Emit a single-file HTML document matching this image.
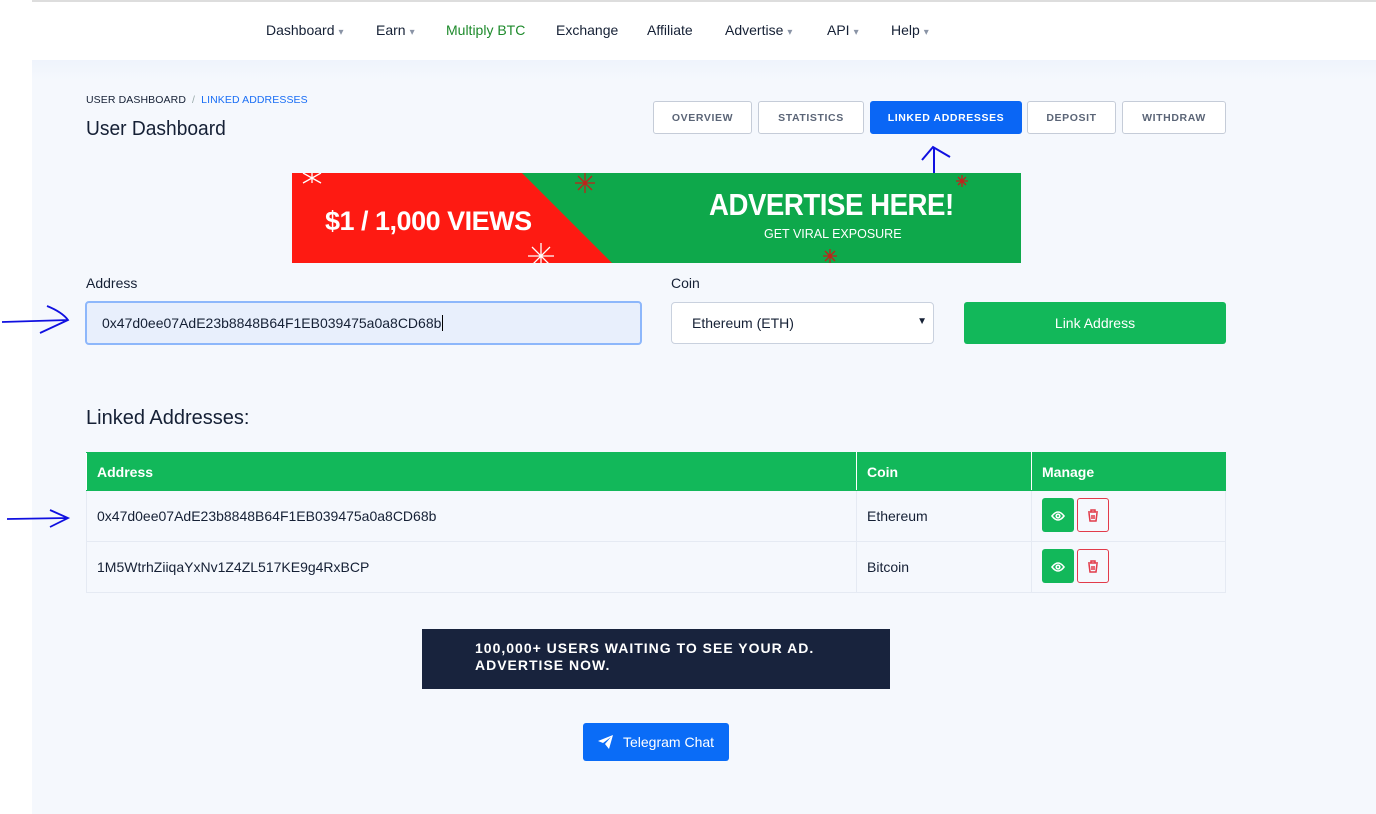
<!DOCTYPE html>
<html><head><meta charset="utf-8"><style>
*{box-sizing:border-box;margin:0;padding:0}
body{width:1376px;height:814px;overflow:hidden;background:#fff;font-family:"Liberation Sans",sans-serif;color:#152035;position:relative}
.a{position:absolute}
.nav{font-size:14px;top:22px;color:#152035;white-space:nowrap}
.nav .c{color:#8a94a6;font-size:10px;margin-left:4px}
.tab{position:absolute;top:101px;height:33px;border:1px solid #c5ccd8;border-radius:3px;background:#fff;font-size:10.5px;font-weight:bold;color:#5b6577;letter-spacing:.6px;display:flex;align-items:center;justify-content:center}
td,th{border:1px solid #e5eaf3;font-size:14px;text-align:left;padding:0 10px}
</style></head><body>
<div class="a" style="left:32px;top:0;width:1344px;height:2px;background:#ddd"></div>
<div class="a" style="left:32px;top:60px;width:1344px;height:754px;background:linear-gradient(#eff4fc,#f5f8fd 20px)"></div>

<div class="a nav" style="left:266px">Dashboard<span class="c">▾</span></div>
<div class="a nav" style="left:376px">Earn<span class="c">▾</span></div>
<div class="a nav" style="left:446px;color:#1d8a2b">Multiply BTC</div>
<div class="a nav" style="left:556px">Exchange</div>
<div class="a nav" style="left:647px">Affiliate</div>
<div class="a nav" style="left:725px">Advertise<span class="c">▾</span></div>
<div class="a nav" style="left:827px">API<span class="c">▾</span></div>
<div class="a nav" style="left:891px">Help<span class="c">▾</span></div>

<div class="a" style="left:86px;top:94px;font-size:10.5px;letter-spacing:.1px">USER DASHBOARD &nbsp;<span style="color:#9aa">/</span>&nbsp; <span style="color:#1a6ef5">LINKED ADDRESSES</span></div>
<div class="a" style="left:86px;top:118px;font-size:20px;transform:scaleX(.96);transform-origin:left">User Dashboard</div>

<div class="tab" style="left:653px;width:99px">OVERVIEW</div>
<div class="tab" style="left:758px;width:106px">STATISTICS</div>
<div class="tab" style="left:870px;width:152px;background:#0a66f5;border-color:#0a66f5;color:#fff">LINKED ADDRESSES</div>
<div class="tab" style="left:1027px;width:89px">DEPOSIT</div>
<div class="tab" style="left:1122px;width:104px">WITHDRAW</div>

<svg class="a" style="left:0;top:0" width="1376" height="814">
<path d="M934 178 L934 148 M922 160 L933 147 L950 157" stroke="#1010e0" stroke-width="2" fill="none"/>
</svg>

<div class="a" style="left:292px;top:173px;width:729px;height:90px;overflow:hidden;background:#0ea84b">
<svg class="a" style="left:0;top:0" width="729" height="90"><polygon points="0,0 230,0 320,90 0,90" fill="#fe1a12"/>
<g stroke="#fff" stroke-width="1.3"><path d="M20 -8 L20 10 M11 0 L29 10 M29 0 L11 10"/><path d="M249 70 L249 96 M236 83 L262 83 M240 74 L258 92 M258 74 L240 92"/></g>
<g stroke="#c1201a" stroke-width="1.3"><path d="M293 0 L293 20 M283 10 L303 10 M286 3 L300 17 M300 3 L286 17"/><path d="M670 2 L670 14 M664 8 L676 8 M666 4 L674 12 M674 4 L666 12"/><path d="M538 76 L538 90 M531 83 L545 83 M533 78 L543 88 M543 78 L533 88"/></g></svg>
<div class="a" style="left:33px;top:33px;color:#fff;font-weight:bold;font-size:27px;letter-spacing:-0.5px;transform:scaleX(1.0);transform-origin:left">$1 / 1,000 VIEWS</div>
<div class="a" style="left:417px;top:14px;color:#fff;font-weight:bold;font-size:31px;letter-spacing:-0.5px;transform:scaleX(.89);transform-origin:left">ADVERTISE HERE!</div>
<div class="a" style="left:472px;top:54px;color:#fff;font-size:12.5px">GET VIRAL EXPOSURE</div>
</div>

<div class="a" style="left:86px;top:275px;font-size:14px">Address</div>
<div class="a" style="left:85px;top:301px;width:557px;height:44px;border:2px solid #8db7fb;border-radius:4px;background:#e8effc;font-size:14px;padding:12px 15px">0x47d0ee07AdE23b8848B64F1EB039475a0a8CD68b<span style="border-left:1px solid #000;margin-left:1px"></span></div>
<svg class="a" style="left:0;top:300px" width="80" height="40"><path d="M2 22 L68 20 M47 6 Q62 12 68 20 Q55 26 40 33" stroke="#1010e0" stroke-width="1.8" fill="none"/></svg>
<svg class="a" style="left:0;top:505px" width="80" height="30"><path d="M7 14 L68 13 M50 5 L68 13 L50 22" stroke="#1010e0" stroke-width="1.8" fill="none"/></svg>

<div class="a" style="left:671px;top:275px;font-size:14px">Coin</div>
<div class="a" style="left:671px;top:302px;width:263px;height:42px;border:1px solid #c9d1de;border-radius:4px;background:#fff;font-size:14px;padding:12px 20px">Ethereum (ETH)<span style="position:absolute;right:6px;top:13px;font-size:10px">▼</span></div>
<div class="a" style="left:964px;top:302px;width:262px;height:42px;border-radius:3px;background:#12b85a;color:#fff;font-size:14px;text-align:center;line-height:42px">Link Address</div>

<div class="a" style="left:86px;top:407px;font-size:20px">Linked Addresses:</div>

<table class="a" style="left:86px;top:452px;width:1140px;border-collapse:collapse">
<tr style="height:38px;background:#12b85a;color:#fff"><th style="width:770px;border-color:#12b85a #fff">Address</th><th style="width:175px;border-color:#12b85a #fff">Coin</th><th style="border-color:#12b85a">Manage</th></tr>
<tr style="height:51px"><td>0x47d0ee07AdE23b8848B64F1EB039475a0a8CD68b</td><td>Ethereum</td><td></td></tr>
<tr style="height:51px"><td>1M5WtrhZiiqaYxNv1Z4ZL517KE9g4RxBCP</td><td>Bitcoin</td><td></td></tr>
</table>

<div class="a" style="left:1042px;top:498px;width:32px;height:34px;background:#12b85a;border-radius:3px"></div>
<div class="a" style="left:1077px;top:498px;width:32px;height:34px;border:1px solid #e23b4a;border-radius:3px"></div>
<div class="a" style="left:1042px;top:549px;width:32px;height:34px;background:#12b85a;border-radius:3px"></div>
<div class="a" style="left:1077px;top:549px;width:32px;height:34px;border:1px solid #e23b4a;border-radius:3px"></div>
<svg class="a" style="left:0;top:0" width="1376" height="814">
<g stroke="#fff" stroke-width="1.6" fill="none"><path d="M1052 516 Q1058 508 1064 516 Q1058 524 1052 516Z"/><circle cx="1058" cy="516" r="1.8"/><path d="M1052 567 Q1058 559 1064 567 Q1058 575 1052 567Z"/><circle cx="1058" cy="567" r="1.8"/></g>
<g stroke="#e23b4a" stroke-width="1.5" fill="none"><path d="M1088 512 L1098 512 M1091 512 L1091 510 L1095 510 L1095 512 M1089 513 L1090 521 L1096 521 L1097 513 M1092 515 L1092 519 M1094 515 L1094 519"/><path d="M1088 563 L1098 563 M1091 563 L1091 561 L1095 561 L1095 563 M1089 564 L1090 572 L1096 572 L1097 564 M1092 566 L1092 570 M1094 566 L1094 570"/></g>
</svg>

<div class="a" style="left:422px;top:629px;width:468px;height:60px;background:#18233d;color:#fff;font-weight:bold;font-size:14px;letter-spacing:1px;padding:11px 0 0 53px;line-height:17px">100,000+ USERS WAITING TO SEE YOUR AD.<br>ADVERTISE NOW.</div>

<div class="a" style="left:583px;top:723px;width:146px;height:38px;background:#0a6cf7;border-radius:3px;color:#fff;font-size:14px;line-height:38px;padding-left:40px">Telegram Chat</div>
<svg class="a" style="left:597px;top:734px" width="18" height="16"><path d="M1 7 L16 1 L12 15 L8 10 L14 3 L6 9 Z" fill="#fff"/></svg>
</body></html>
